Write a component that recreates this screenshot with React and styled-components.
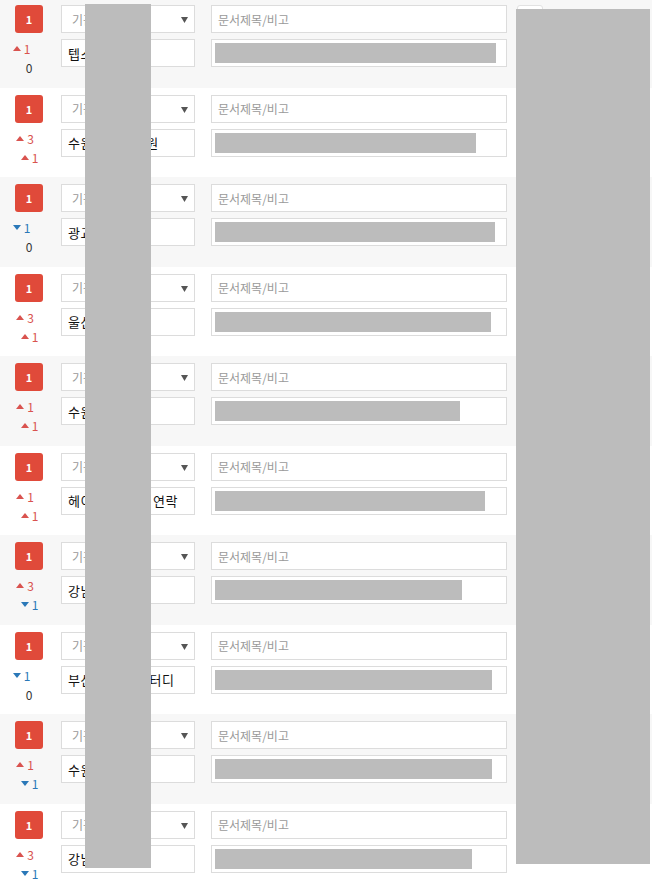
import React from "react";
import styled, { createGlobalStyle } from "styled-components";

const GlobalStyle = createGlobalStyle`
  html, body {
    margin: 0;
    padding: 0;
    background: #fff;
    font-family: "Noto Sans CJK KR", "Noto Sans", sans-serif;
  }
`;

const Page = styled.div`
  position: relative;
  width: 652px;
  margin-top: -2px;
`;

const Row = styled.div`
  display: flex;
  height: 89.5px;
  box-sizing: border-box;
  padding: 7px 0 0 15px;
  background: ${(p) => (p.$odd ? "#f7f7f7" : "#fff")};
`;

const Side = styled.div`
  width: 28px;
  margin-right: 18px;
  display: flex;
  flex-direction: column;
  align-items: center;
`;

const Badge = styled.div`
  width: 28px;
  height: 28px;
  border-radius: 3px;
  background: #e04a3a;
  color: #fff;
  font-size: 11px;
  font-weight: 700;
  display: flex;
  align-items: center;
  justify-content: center;
  margin-bottom: 6px;
`;

const Stat = styled.div`
  display: flex;
  align-items: center;
  gap: 3px;
  height: 19px;
  font-size: 12px;
  color: ${(p) => (p.$dir === "up" ? "#d9534f" : p.$dir === "down" ? "#2a78b8" : "#333")};
  margin-right: ${(p) => p.$shift || 0}px;
  margin-left: ${(p) => p.$push || 0}px;
`;

const Fields = styled.div`
  display: flex;
  flex-direction: column;
  gap: 6px;
  width: ${(p) => p.$w}px;
  margin-right: ${(p) => p.$mr || 0}px;
`;

const Box = styled.div`
  position: relative;
  height: 28px;
  box-sizing: border-box;
  border: 1px solid #dcdcdc;
  background: #fff;
  display: flex;
  align-items: center;
  padding: 0 ${(p) => p.$pad || 6}px;
  font-size: ${(p) => (p.$muted ? 12 : 13)}px;
  letter-spacing: ${(p) => (p.$muted ? 0 : 0.5)}px;
  color: ${(p) => (p.$muted ? "#9a9a9a" : "#111")};
  white-space: nowrap;
  overflow: hidden;
`;

const Caret = styled.svg`
  position: absolute;
  right: 6px;
  top: 11px;
`;

const Redact = styled.div`
  height: 20px;
  margin-left: -2px;
  background: #bcbcbc;
`;

const Corner = styled.div`
  width: 26px;
  height: 20px;
  margin-left: 10px;
  border: 1px solid #e2e2e2;
  border-radius: 3px;
  background: #fff;
  box-sizing: border-box;
`;

const Cover = styled.div`
  position: absolute;
  background: #bcbcbc;
  left: ${(p) => p.$x}px;
  top: ${(p) => p.$y}px;
  width: ${(p) => p.$w}px;
  height: ${(p) => p.$h}px;
`;

const Arrow = ({ dir }) => (
  <svg width="8" height="5" viewBox="0 0 8 5">
    {dir === "up" ? (
      <polygon points="0,5 4,0 8,5" fill="currentColor" />
    ) : (
      <polygon points="0,0 8,0 4,5" fill="currentColor" />
    )}
  </svg>
);

const rows = [
  { a: ["up", 1], b: ["none", 0], name: "텝스 스터디", w: 281 },
  { a: ["up", 3], b: ["up", 1], name: "수원 토익반회원", w: 261 },
  { a: ["down", 1], b: ["none", 0], name: "광교 영어회화", w: 280 },
  { a: ["up", 3], b: ["up", 1], name: "울산 토익반", w: 276 },
  { a: ["up", 1], b: ["up", 1], name: "수원 스터디", w: 245 },
  { a: ["up", 1], b: ["up", 1], name: "헤이 토익 모임 연락", w: 270 },
  { a: ["up", 3], b: ["down", 1], name: "강남 토익", w: 247 },
  { a: ["down", 1], b: ["none", 0], name: "부산 대학교 스터디", w: 277 },
  { a: ["up", 1], b: ["down", 1], name: "수원 회화", w: 277 },
  { a: ["up", 3], b: ["down", 1], name: "강남 스피킹", w: 257 },
];

function StatLine({ dir, n, shift, push }) {
  return (
    <Stat $dir={dir} $shift={shift} $push={push}>
      {dir !== "none" && <Arrow dir={dir} />}
      <span>{n}</span>
    </Stat>
  );
}

export default function App() {
  return (
    <Page>
      <GlobalStyle />
      {rows.map((r, i) => {
        const zero = r.b[0] === "none";
        return (
          <Row key={i} $odd={i % 2 === 0}>
            <Side>
              <Badge>1</Badge>
              <StatLine dir={r.a[0]} n={r.a[1]} shift={zero ? 15 : 8} />
              <StatLine dir={r.b[0]} n={r.b[1]} push={zero ? 0 : 1} />
            </Side>
            <Fields $w={134} $mr={16}>
              <Box $muted $pad={10}>
                기관 선택
                <Caret width="7" height="6" viewBox="0 0 7 6">
                  <polygon points="0,0 7,0 3.5,6" fill="#555" />
                </Caret>
              </Box>
              <Box>{r.name}</Box>
            </Fields>
            <Fields $w={296}>
              <Box $muted>문서제목/비고</Box>
              <Box $pad={5}>
                <Redact style={{ width: r.w }} />
              </Box>
            </Fields>
            {i === 0 && <Corner />}
          </Row>
        );
      })}
      <Cover $x={85} $y={6} $w={66} $h={864} />
      <Cover $x={516} $y={11} $w={134} $h={855} />
    </Page>
  );
}
